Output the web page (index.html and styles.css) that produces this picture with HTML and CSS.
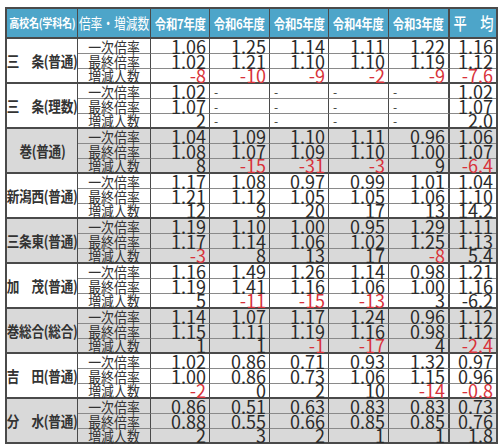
FILE: index.html
```html
<!DOCTYPE html>
<html lang="ja">
<head>
<meta charset="utf-8">
<link rel="stylesheet" href="styles.css">
</head>
<body>
<table class="tbl">
<colgroup>
<col class="w-name"><col class="w-kind"><col class="w-y1"><col class="w-y2"><col class="w-y1"><col class="w-y2"><col class="w-y3"><col class="w-avg">
</colgroup>
<thead>
<tr class="head">
<th class="h-name"><span class="sq">高校名(学科名)</span></th>
<th class="h-kind"><span class="sq">倍率・増減数</span></th>
<th class="h-year"><span class="sq">令和7年度</span></th>
<th class="h-year"><span class="sq">令和6年度</span></th>
<th class="h-year"><span class="sq">令和5年度</span></th>
<th class="h-year"><span class="sq">令和4年度</span></th>
<th class="h-year last"><span class="sq">令和3年度</span></th>
<th class="h-avg"><span class="sq">平　均</span></th>
</tr>
</thead>
<tbody>
<tr class="r1"><td class="name" rowspan="3"><span class="sq">三　条(普通)</span></td><td class="kind"><span class="sq">一次倍率</span></td><td class="n">1.06</td><td class="n">1.25</td><td class="n">1.14</td><td class="n">1.11</td><td class="n last">1.22</td><td class="n avg">1.16</td></tr>
<tr class="r2"><td class="kind"><span class="sq">最終倍率</span></td><td class="n">1.02</td><td class="n">1.21</td><td class="n">1.10</td><td class="n">1.10</td><td class="n last">1.19</td><td class="n avg">1.12</td></tr>
<tr class="r3"><td class="kind"><span class="sq">増減人数</span></td><td class="n neg">-8</td><td class="n neg">-10</td><td class="n neg">-9</td><td class="n neg">-2</td><td class="n last neg">-9</td><td class="n avg neg">-7.6</td></tr>

<tr class="r1"><td class="name" rowspan="3"><span class="sq">三　条(理数)</span></td><td class="kind"><span class="sq">一次倍率</span></td><td class="n">1.02</td><td class="dash">-</td><td class="dash">-</td><td class="dash">-</td><td class="dash last">-</td><td class="n avg">1.02</td></tr>
<tr class="r2"><td class="kind"><span class="sq">最終倍率</span></td><td class="n">1.07</td><td class="dash">-</td><td class="dash">-</td><td class="dash">-</td><td class="dash last">-</td><td class="n avg">1.07</td></tr>
<tr class="r3"><td class="kind"><span class="sq">増減人数</span></td><td class="n">2</td><td class="dash">-</td><td class="dash">-</td><td class="dash">-</td><td class="dash last">-</td><td class="n avg">2.0</td></tr>

<tr class="r1 gray"><td class="name" rowspan="3"><span class="sq">巻(普通)</span></td><td class="kind"><span class="sq">一次倍率</span></td><td class="n">1.04</td><td class="n">1.09</td><td class="n">1.10</td><td class="n">1.11</td><td class="n last">0.96</td><td class="n avg">1.06</td></tr>
<tr class="r2 gray"><td class="kind"><span class="sq">最終倍率</span></td><td class="n">1.08</td><td class="n">1.07</td><td class="n">1.09</td><td class="n">1.10</td><td class="n last">1.00</td><td class="n avg">1.07</td></tr>
<tr class="r3 gray"><td class="kind"><span class="sq">増減人数</span></td><td class="n">8</td><td class="n neg">-15</td><td class="n neg">-31</td><td class="n neg">-3</td><td class="n last">9</td><td class="n avg neg">-6.4</td></tr>

<tr class="r1"><td class="name" rowspan="3"><span class="sq">新潟西(普通)</span></td><td class="kind"><span class="sq">一次倍率</span></td><td class="n">1.17</td><td class="n">1.08</td><td class="n">0.97</td><td class="n">0.99</td><td class="n last">1.01</td><td class="n avg">1.04</td></tr>
<tr class="r2"><td class="kind"><span class="sq">最終倍率</span></td><td class="n">1.21</td><td class="n">1.12</td><td class="n">1.05</td><td class="n">1.05</td><td class="n last">1.06</td><td class="n avg">1.10</td></tr>
<tr class="r3"><td class="kind"><span class="sq">増減人数</span></td><td class="n">12</td><td class="n">9</td><td class="n">20</td><td class="n">17</td><td class="n last">13</td><td class="n avg">14.2</td></tr>

<tr class="r1 gray"><td class="name" rowspan="3"><span class="sq">三条東(普通)</span></td><td class="kind"><span class="sq">一次倍率</span></td><td class="n">1.19</td><td class="n">1.10</td><td class="n">1.00</td><td class="n">0.95</td><td class="n last">1.29</td><td class="n avg">1.11</td></tr>
<tr class="r2 gray"><td class="kind"><span class="sq">最終倍率</span></td><td class="n">1.17</td><td class="n">1.14</td><td class="n">1.06</td><td class="n">1.02</td><td class="n last">1.25</td><td class="n avg">1.13</td></tr>
<tr class="r3 gray"><td class="kind"><span class="sq">増減人数</span></td><td class="n neg">-3</td><td class="n">8</td><td class="n">13</td><td class="n">17</td><td class="n last neg">-8</td><td class="n avg">5.4</td></tr>

<tr class="r1"><td class="name" rowspan="3"><span class="sq">加　茂(普通)</span></td><td class="kind"><span class="sq">一次倍率</span></td><td class="n">1.16</td><td class="n">1.49</td><td class="n">1.26</td><td class="n">1.14</td><td class="n last">0.98</td><td class="n avg">1.21</td></tr>
<tr class="r2"><td class="kind"><span class="sq">最終倍率</span></td><td class="n">1.19</td><td class="n">1.41</td><td class="n">1.16</td><td class="n">1.06</td><td class="n last">1.00</td><td class="n avg">1.16</td></tr>
<tr class="r3"><td class="kind"><span class="sq">増減人数</span></td><td class="n">5</td><td class="n neg">-11</td><td class="n neg">-15</td><td class="n neg">-13</td><td class="n last">3</td><td class="n avg">-6.2</td></tr>

<tr class="r1 gray"><td class="name" rowspan="3"><span class="sq">巻総合(総合)</span></td><td class="kind"><span class="sq">一次倍率</span></td><td class="n">1.14</td><td class="n">1.07</td><td class="n">1.17</td><td class="n">1.24</td><td class="n last">0.96</td><td class="n avg">1.12</td></tr>
<tr class="r2 gray"><td class="kind"><span class="sq">最終倍率</span></td><td class="n">1.15</td><td class="n">1.11</td><td class="n">1.19</td><td class="n">1.16</td><td class="n last">0.98</td><td class="n avg">1.12</td></tr>
<tr class="r3 gray"><td class="kind"><span class="sq">増減人数</span></td><td class="n">1</td><td class="n">1</td><td class="n neg">-1</td><td class="n neg">-17</td><td class="n last">4</td><td class="n avg neg">-2.4</td></tr>

<tr class="r1"><td class="name" rowspan="3"><span class="sq">吉　田(普通)</span></td><td class="kind"><span class="sq">一次倍率</span></td><td class="n">1.02</td><td class="n">0.86</td><td class="n">0.71</td><td class="n">0.93</td><td class="n last">1.32</td><td class="n avg">0.97</td></tr>
<tr class="r2"><td class="kind"><span class="sq">最終倍率</span></td><td class="n">1.00</td><td class="n">0.86</td><td class="n">0.73</td><td class="n">1.06</td><td class="n last">1.15</td><td class="n avg">0.96</td></tr>
<tr class="r3"><td class="kind"><span class="sq">増減人数</span></td><td class="n neg">-2</td><td class="n">0</td><td class="n">2</td><td class="n">10</td><td class="n last neg">-14</td><td class="n avg neg">-0.8</td></tr>

<tr class="r1 gray"><td class="name" rowspan="3"><span class="sq">分　水(普通)</span></td><td class="kind"><span class="sq">一次倍率</span></td><td class="n">0.86</td><td class="n">0.51</td><td class="n">0.63</td><td class="n">0.83</td><td class="n last">0.83</td><td class="n avg">0.73</td></tr>
<tr class="r2 gray"><td class="kind"><span class="sq">最終倍率</span></td><td class="n">0.88</td><td class="n">0.55</td><td class="n">0.66</td><td class="n">0.85</td><td class="n last">0.85</td><td class="n avg">0.76</td></tr>
<tr class="r3 gray"><td class="kind"><span class="sq">増減人数</span></td><td class="n">2</td><td class="n">3</td><td class="n">2</td><td class="n">1</td><td class="n last">1</td><td class="n avg">1.8</td></tr>
</tbody>
</table>
</body>
</html>
```

FILE: styles.css
```css
html, body {
  margin: 0;
  padding: 0;
  background: #ffffff;
  overflow: hidden;
}
body {
  padding: 7px 0 0 5px;
  font-family: "Noto Sans CJK JP", "Noto Sans", sans-serif;
  color: #333333;
}
.tbl {
  border-collapse: separate;
  border-spacing: 0;
  table-layout: fixed;
  width: 493px;
  border-top: 2px solid #4a4a4a;
  border-left: 2px solid #4a4a4a;
  border-right: 2px solid #4a4a4a;
}
th, td {
  box-sizing: border-box;
  padding: 0;
  white-space: nowrap;
  overflow: visible;
  vertical-align: middle;
}
.w-name { width: 71px; }
.w-kind { width: 73px; }
.w-y1 { width: 59px; }
.w-y2 { width: 60px; }
.w-y3 { width: 61px; }
.w-avg { width: 46px; }

.sq {
  display: inline-block;
  vertical-align: top;
  margin: 0 -30px;
  transform: scaleX(0.84);
  transform-origin: center center;
  white-space: nowrap;
}

.head th {
  background: #4da5c9;
  color: #ffffff;
  height: 30px;
  line-height: 28px;
  border-right: 1px solid #4a4a4a;
  border-bottom: 2px solid #4a4a4a;
}
.head th.h-avg { border-right: 0; }
.h-name { font-size: 12px; font-weight: 700; letter-spacing: -0.3px; }
.h-kind { font-size: 15px; font-weight: 400; }
.h-kind .sq { transform: scaleX(0.78); }
.h-year { font-size: 13.5px; font-weight: 700; letter-spacing: -0.3px; }
.h-avg { font-size: 17px; font-weight: 500; }
.h-avg .sq { transform: scaleX(0.78); }

td {
  height: 15px;
  line-height: 13px;
  border-right: 1px solid #4a4a4a;
  border-bottom: 1px solid #8a8a8a;
}
.r3 td, td.name { border-bottom: 2px solid #4a4a4a; }
th.last, td.last { border-right: 2px solid #4a4a4a; }
td.avg { border-right: 0; }
.gray td { background: #d9d9d9; }

td.name {
  text-align: center;
  font-size: 15px;
  font-weight: 700;
  letter-spacing: -0.3px;
  line-height: 16px;
}
.kind {
  text-align: center;
  font-size: 15px;
  color: #333333;
}
.kind .sq { transform: scaleX(0.86); }
.n {
  text-align: right;
  font-size: 18px;
  padding-right: 3px;
  color: #2a2a2a;
}
.neg { color: #d8323a; }
.dash {
  text-align: left;
  padding-left: 4px;
  font-size: 12px;
}
```
